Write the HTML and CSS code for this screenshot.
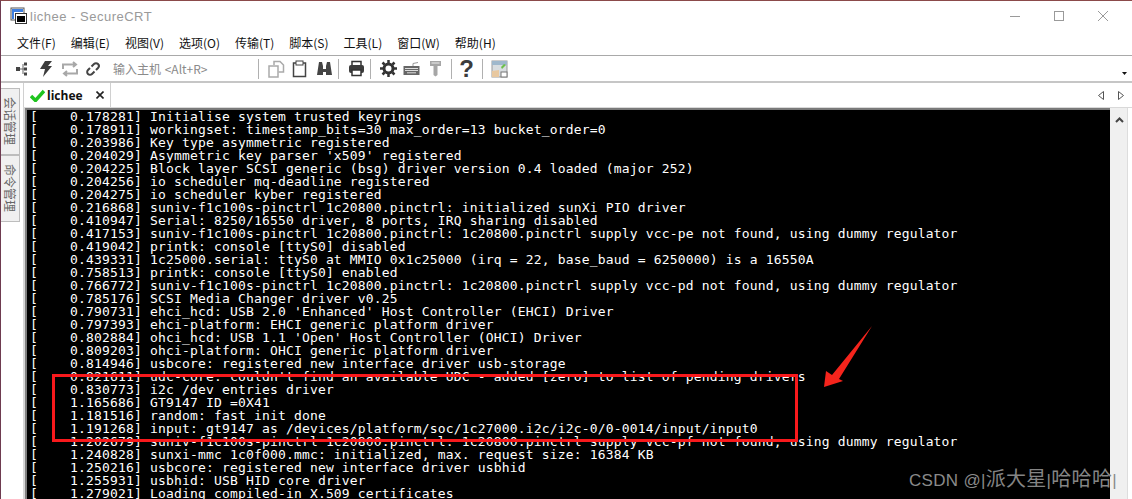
FILE: index.html
```html
<!DOCTYPE html>
<html lang="zh">
<head>
<meta charset="utf-8">
<title>lichee - SecureCRT</title>
<link rel="stylesheet" href="styles.css">
</head>
<body>
<div class="window">
  <header class="titlebar">
    <svg class="appicon" width="18" height="18" viewBox="0 0 18 18"><rect x="1" y="1" width="13" height="12" fill="#fff" stroke="#555"/><rect x="2" y="2" width="11" height="3" fill="#3f7fe0"/><rect x="2" y="2" width="2" height="10" fill="#3f7fe0"/><rect x="5.500" y="6.500" width="11" height="10" fill="#fff" stroke="#333"/><rect x="7" y="9" width="8" height="6" fill="#000"/></svg>
    <span class="title">lichee - SecureCRT</span>
    <span class="spacer"></span>
    <div class="wincontrols">
      <svg width="12" height="12" viewBox="0 0 12 12"><path d="M1 6.500h10" stroke="#9a9a9a"/></svg>
      <svg width="12" height="12" viewBox="0 0 12 12"><rect x="1.500" y="1.500" width="9" height="9" fill="none" stroke="#9a9a9a"/></svg>
      <svg width="12" height="12" viewBox="0 0 12 12"><path d="M1 1l10 10M11 1L1 11" stroke="#9a9a9a"/></svg>
    </div>
  </header>
  <nav class="menubar">
    <span>文件(F)</span><span>编辑(E)</span><span>视图(V)</span><span>选项(O)</span><span>传输(T)</span><span>脚本(S)</span><span>工具(L)</span><span>窗口(W)</span><span>帮助(H)</span>
  </nav>
  <div class="toolbar">
    <svg width="16" height="16" viewBox="0 0 16 16"><rect x="1" y="6" width="4" height="4" fill="#444"/><path d="M5 8h4M8 3v10" stroke="#666"/><rect x="9" y="1.500" width="3" height="3" fill="#444"/><rect x="9" y="6.500" width="3" height="3" fill="#444"/><rect x="9" y="11.500" width="3" height="3" fill="#444"/></svg>
    <svg class="m7" width="16" height="18" viewBox="0 0 16 18"><path d="M7 1h7l-4 5h4L5 17l2-8H2z" fill="#3c3c3c"/></svg>
    <svg class="m7" width="18" height="16" viewBox="0 0 18 16"><path d="M2 8V3.500h12M12 1l3 2.500-3 2.500M16 8v4.500H4M6 10l-3 2.500 3 2.500" fill="none" stroke="#a8a8a8" stroke-width="2"/></svg>
    <svg class="m6" width="16" height="16" viewBox="0 0 16 16"><path d="M6.500 5.500L9 3a2.600 2.600 0 0 1 4 4l-2 2M9.500 10.500L7 13a2.600 2.600 0 0 1-4-4l2-2" fill="none" stroke="#444" stroke-width="2"/></svg>
    <span class="hostinput">输入主机 &lt;Alt+R&gt;</span>
    <i class="sep"></i>
    <svg class="m9" width="17" height="18" viewBox="0 0 17 18"><rect x="1" y="6" width="9" height="11" fill="#fff" stroke="#aaa" stroke-width="1.500"/><path d="M6 5V1.500h6l3.500 3.500v7H10.500" fill="none" stroke="#aaa" stroke-width="1.500"/></svg>
    <svg class="m7" width="15" height="18" viewBox="0 0 15 18"><path d="M4 3H1.500v13.500h12V3H11" fill="none" stroke="#444" stroke-width="1.500"/><rect x="4" y="1" width="7" height="4" fill="#fff" stroke="#444"/></svg>
    <svg class="m9" width="17" height="17" viewBox="0 0 17 17"><path d="M3 2h3l1 4v3h3V6l1-4h3l2 13h-6v-3H7v3H1z" fill="#444"/></svg>
    <i class="sep m5"></i>
    <svg class="m9" width="17" height="17" viewBox="0 0 17 17"><path d="M4 5V1.500h9V5" fill="none" stroke="#333" stroke-width="1.500"/><rect x="1" y="5" width="15" height="8" rx="2" fill="#3c3c3c"/><rect x="4" y="10" width="9" height="5.500" fill="#fff" stroke="#333" stroke-width="1.500"/></svg>
    <i class="sep m5"></i>
    <svg class="m9" width="17" height="17" viewBox="0 0 17 17"><circle cx="8.500" cy="8.500" r="4.500" fill="none" stroke="#333" stroke-width="3"/><path d="M8.500 0v3M8.500 14v3M0 8.500h3M14 8.500h3M2.500 2.500l2 2M12.500 12.500l2 2M14.500 2.500l-2 2M4.500 12.500l-2 2" stroke="#333" stroke-width="2.500"/></svg>
    <svg class="m6" width="17" height="15" viewBox="0 0 17 15"><rect x="0.500" y="5" width="16" height="9" fill="#666"/><path d="M2 7.500h13M2 9.500h13M4 11.800h9" stroke="#ddd"/><path d="M10 5V2.500l5-1" fill="none" stroke="#999"/></svg>
    <svg class="m9" width="13" height="17" viewBox="0 0 13 17"><path d="M1 1h11v5H8.500v9l-2 1.500-2-1.500V6H1z" fill="#a6a6a6"/><path d="M2.500 3h8" stroke="#eee"/></svg>
    <i class="sep m9"></i>
    <span class="help m7">?</span>
    <i class="sep m8"></i>
    <svg class="m8" width="17" height="18" viewBox="0 0 17 18"><rect x="1" y="1" width="15" height="16" fill="#d8dde0" stroke="#999"/><rect x="1" y="1" width="15" height="4" fill="#9fb8cc"/><path d="M1 17v-6l7-1v7z" fill="#e8c8a0"/><path d="M10 7l3-3 2 1-4 4z" fill="#6cc04a"/><rect x="10" y="12" width="6" height="5" fill="#fff" stroke="#777"/></svg>
    <span class="spacer"></span>
    <svg class="dropdown" width="5" height="3" viewBox="0 0 5 3"><path d="M0 0h5L2.500 3z" fill="#111"/></svg>
  </div>
  <main class="body">
    <aside class="sidetabs">
      <div class="sidetab">会话管理</div>
      <div class="sidetab">命令管理</div>
    </aside>
    <div class="rightcol">
      <div class="tabstrip">
        <div class="tab">
          <svg width="15" height="13" viewBox="0 0 15 13"><path d="M1 7l4.500 4.500L14 2" fill="none" stroke="#1fc41f" stroke-width="3.500"/></svg>
          <b>lichee</b>
          <svg class="tabclose" width="8" height="8" viewBox="0 0 8 8"><path d="M.5.500l7 7M7.500.500l-7 7" stroke="#222" stroke-width="1.600"/></svg>
        </div>
        <span class="spacer"></span>
        <div class="tabnav">
          <svg width="6" height="9" viewBox="0 0 6 9"><path d="M5.500.500v8L.5 4.500z" fill="#fff" stroke="#555"/></svg>
          <svg width="6" height="9" viewBox="0 0 6 9"><path d="M.5.500v8l5-4z" fill="#fff" stroke="#555"/></svg>
        </div>
      </div>
      <div class="termrow">
        <section class="termframe">
          <pre class="terminal">[    0.178281] Initialise system trusted keyrings
[    0.178911] workingset: timestamp_bits=30 max_order=13 bucket_order=0
[    0.203986] Key type asymmetric registered
[    0.204029] Asymmetric key parser 'x509' registered
[    0.204225] Block layer SCSI generic (bsg) driver version 0.4 loaded (major 252)
[    0.204256] io scheduler mq-deadline registered
[    0.204275] io scheduler kyber registered
[    0.216868] suniv-f1c100s-pinctrl 1c20800.pinctrl: initialized sunXi PIO driver
[    0.410947] Serial: 8250/16550 driver, 8 ports, IRQ sharing disabled
[    0.417153] suniv-f1c100s-pinctrl 1c20800.pinctrl: 1c20800.pinctrl supply vcc-pe not found, using dummy regulator
[    0.419042] printk: console [ttyS0] disabled
[    0.439331] 1c25000.serial: ttyS0 at MMIO 0x1c25000 (irq = 22, base_baud = 6250000) is a 16550A
[    0.758513] printk: console [ttyS0] enabled
[    0.766772] suniv-f1c100s-pinctrl 1c20800.pinctrl: 1c20800.pinctrl supply vcc-pd not found, using dummy regulator
[    0.785176] SCSI Media Changer driver v0.25
[    0.790731] ehci_hcd: USB 2.0 'Enhanced' Host Controller (EHCI) Driver
[    0.797393] ehci-platform: EHCI generic platform driver
[    0.802884] ohci_hcd: USB 1.1 'Open' Host Controller (OHCI) Driver
[    0.809203] ohci-platform: OHCI generic platform driver
[    0.814946] usbcore: registered new interface driver usb-storage
[    0.821611] udc-core: couldn't find an available UDC - added [zero] to list of pending drivers
[    0.830773] i2c /dev entries driver
[    1.165686] GT9147 ID =0X41
[    1.181516] random: fast init done
[    1.191268] input: gt9147 as /devices/platform/soc/1c27000.i2c/i2c-0/0-0014/input/input0
[    1.202679] suniv-f1c100s-pinctrl 1c20800.pinctrl: 1c20800.pinctrl supply vcc-pf not found, using dummy regulator
[    1.240828] sunxi-mmc 1c0f000.mmc: initialized, max. request size: 16384 KB
[    1.250216] usbcore: registered new interface driver usbhid
[    1.255931] usbhid: USB HID core driver
[    1.279021] Loading compiled-in X.509 certificates</pre>
          <div class="redbox"></div>
          <svg class="arrow" width="52" height="66" viewBox="0 0 52 66"><path d="M49 1L16 54l4 2L1 62l2-16 6 4z" fill="#f5241c"/></svg>
        </section>
        <div class="scrollbar"><svg width="9" height="6" viewBox="0 0 9 6"><path d="M1 5l3.500-3.500L8 5" fill="none" stroke="#444" stroke-width="2"/></svg></div>
      </div>
    </div>
    <div class="watermark">CSDN @|<span class="cjk">派大星</span>|<span class="cjk">哈哈哈</span>|</div>
  </main>
</div>
</body>
</html>
```
FILE: styles.css
```css
* { box-sizing: border-box; }
html, body { margin: 0; padding: 0; }
body { width: 1132px; height: 499px; overflow: hidden; background: #fff; font-family: "Noto Sans CJK SC", "Liberation Sans", sans-serif; }
.window { width: 1132px; height: 499px; display: flex; flex-direction: column; border-top: 1px solid #8b4a4a; border-left: 1px solid #6e3b50; overflow: hidden; }
.spacer { flex: 1; }
.titlebar { height: 30px; display: flex; align-items: center; padding-left: 9px; background: #fff; flex: none; }
.appicon { margin-right: 2px; }
.title { font: 13px "Liberation Sans", sans-serif; color: #9a9a9a; letter-spacing: .5px; }
.wincontrols { display: flex; gap: 32px; padding-right: 23px; align-items: center; }
.menubar { height: 25px; flex: none; display: flex; align-items: center; gap: 15px; padding: 0 0 2px 16px; font-size: 12px; color: #111; border-bottom: 1px solid #a9a9a9; }
.toolbar { height: 27px; flex: none; display: flex; align-items: center; padding-left: 14px; border-bottom: 2px solid #c6c6c6; }
.m5 { margin-left: 5px; }
.m6 { margin-left: 6px; }
.m7 { margin-left: 7px; }
.m8 { margin-left: 8px; }
.m9 { margin-left: 9px; }
.hostinput { font-size: 12px; color: #8a8a8a; margin-left: 12px; width: 145px; word-spacing: 1px; }
.sep { width: 1px; height: 20px; background: #b0b0b0; flex: none; }
.help { font: bold 24px "Liberation Sans", sans-serif; color: #3c3c3c; width: 15px; text-align: center; line-height: 20px; }
.dropdown { margin: 10px 5px 0 0; }
.body { position: relative; flex: 1; display: flex; min-height: 0; background: #fff; }
.sidetabs { width: 22px; flex: none; display: flex; flex-direction: column; padding-top: 5px; }
.sidetab { width: 19px; height: 67px; writing-mode: vertical-rl; text-orientation: sideways; background: #f0f0f0; border: 1px solid #bdbdbd; border-left: none; color: #666; font-size: 12px; display: flex; align-items: center; justify-content: center; }
.rightcol { flex: 1; min-width: 0; display: flex; flex-direction: column; }
.tabstrip { height: 25px; flex: none; display: flex; align-items: stretch; border-bottom: 1px solid #d9d9d9; }
.tab { width: 88px; display: flex; align-items: center; padding-left: 6px; gap: 2px; border: 1px solid #d0d0d0; border-width: 0 1px; background: #fff; }
.tab b { font: bold 12px "Open Sans", "Liberation Sans", sans-serif; color: #111; }
.tabclose { margin-left: 11px; }
.tabnav { display: flex; align-items: center; gap: 14px; padding-right: 8px; }
.termrow { flex: 1; min-height: 0; display: flex; border-left: 2px solid #d6d6d6; }
.termframe { position: relative; flex: 1; min-width: 0; border-top: 2px solid #7a7a7a; border-left: 2px solid #808080; background: #000; overflow: hidden; }
.terminal { margin: 0; padding: 0 0 0 3px; font: 13px/13px "DejaVu Sans Mono", monospace; letter-spacing: .17px; color: #fff; white-space: pre; }
.redbox { position: absolute; left: 25px; top: 264px; width: 746px; height: 68px; border: 3px solid #f8191c; }
.arrow { position: absolute; left: 796px; top: 215px; }
.watermark { position: absolute; left: 908px; top: 383px; font: 17px/24px "Liberation Sans", sans-serif; letter-spacing: .3px; color: #8a8a8a; white-space: nowrap; }
.cjk { font: 20px/24px "Noto Sans CJK SC", sans-serif; color: #858585; }
.scrollbar { width: 22px; flex: none; background: #f0f0f0; display: flex; justify-content: flex-start; padding: 9px 0 0 5px; align-items: flex-start; border-right: 4px solid #fff; position: relative; box-shadow: inset -1px 0 0 #ddd; }
```
